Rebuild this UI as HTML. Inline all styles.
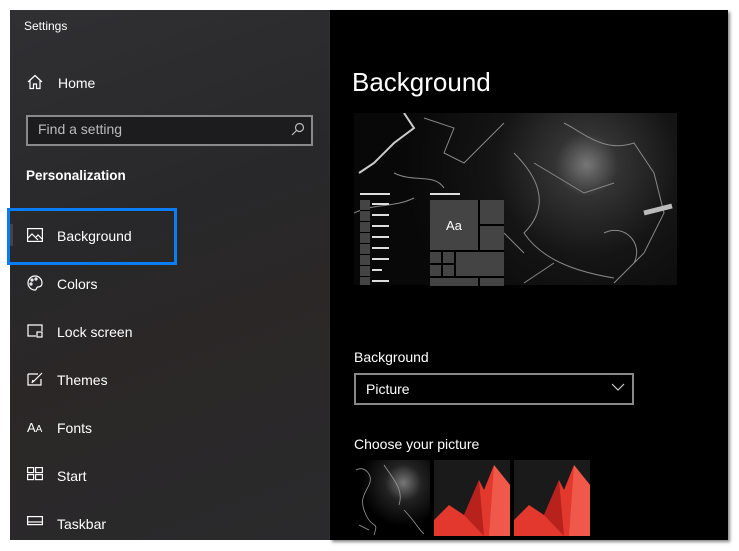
<!DOCTYPE html>
<html><head><style>
body{margin:0;width:739px;height:551px;background:#fff;position:relative;overflow:hidden;font-family:"Liberation Sans",sans-serif;color:#fff}
.l{position:absolute;left:10px;top:10px;width:320px;height:530px;background:linear-gradient(160deg,#303033 0%,#28282a 40%,#2b2727 60%,#2a2a2c 100%)}
.r{position:absolute;left:330px;top:10px;width:398px;height:530px;background:#000;box-shadow:2px 2px 3px #888}
.t{position:absolute;font-size:14px;white-space:nowrap}
.ic{position:absolute;left:27px}
.ab{position:absolute}
</style></head><body>
<div class="l"></div><div class="r"></div>
<div class="t" style="left:24px;top:19px;font-size:12px">Settings</div>
<svg class="ic" style="top:74px" width="16" height="16" viewBox="0 0 16 16" fill="none" stroke="#fff" stroke-width="1.2"><path d="M1 8L8 1.5 15 8M3 6.5V14.5H6.5V10H9.5V14.5H13V6.5"/></svg>
<div class="t" style="left:58px;top:75px">Home</div>
<div class="ab" style="left:26px;top:115px;width:283px;height:27px;border:2px solid #8a8a8a;background:#1c1c1e"></div>
<div class="t" style="left:38px;top:121px;color:#bbb;font-size:14px">Find a setting</div>
<svg class="ab" style="left:291px;top:122px" width="14" height="14" viewBox="0 0 14 14" fill="none" stroke="#bbb" stroke-width="1.2"><circle cx="8.5" cy="5.5" r="4"/><path d="M5.5 8.5L1 13"/></svg>
<div class="t" style="left:26px;top:168px;font-weight:bold;font-size:13.5px">Personalization</div>
<div class="ab" style="left:10px;top:224px;width:3px;height:22px;background:#444"></div>
<div class="ab" style="left:7px;top:208px;width:164px;height:51px;border:3px solid #0a7cf4"></div>
<svg class="ic" style="top:228px" width="16" height="14" viewBox="0 0 16 14" fill="none" stroke="#fff" stroke-width="1.2"><rect x="0.6" y="0.6" width="14.8" height="12.8"/><path d="M1 10L5 6 11 12M9 9L11 7 15 11"/></svg>
<div class="t" style="left:57px;top:228px">Background</div>
<svg class="ic" style="top:275px" width="16" height="16" viewBox="0 0 16 16" fill="none" stroke="#fff" stroke-width="1.2"><path d="M8 1A7 7 0 1 0 8 15C10 15 9 12 11 12S15 11 15 8A7 7 0 0 0 8 1Z"/><circle cx="5" cy="5" r="1"/><circle cx="9" cy="4" r="1"/><circle cx="4" cy="9" r="1"/></svg>
<div class="t" style="left:57px;top:276px">Colors</div>
<svg class="ic" style="top:324px" width="16" height="14" viewBox="0 0 16 14" fill="none" stroke="#fff" stroke-width="1.2"><path d="M9 12H1V1H15V7"/><rect x="10" y="8" width="5" height="5"/></svg>
<div class="t" style="left:57px;top:324px">Lock screen</div>
<svg class="ic" style="top:371px" width="16" height="16" viewBox="0 0 16 16" fill="none" stroke="#fff" stroke-width="1.2"><path d="M1 3H11M1 3V14H14V8M6 11L15 2M5 12L6 9"/></svg>
<div class="t" style="left:57px;top:372px">Themes</div>
<div class="t" style="left:27px;top:420px;font-size:13px">A<span style="font-size:10px">A</span></div>
<div class="t" style="left:57px;top:420px">Fonts</div>
<svg class="ic" style="top:467px" width="16" height="14" viewBox="0 0 16 14" fill="none" stroke="#fff" stroke-width="1.2"><rect x="0.6" y="0.6" width="6" height="5"/><rect x="8.6" y="0.6" width="6.8" height="5"/><rect x="0.6" y="7.6" width="6" height="5"/><rect x="8.6" y="7.6" width="6.8" height="5"/></svg>
<div class="t" style="left:57px;top:468px">Start</div>
<svg class="ic" style="top:516px" width="16" height="10" viewBox="0 0 16 10" fill="none" stroke="#fff" stroke-width="1.2"><rect x="0.6" y="0.6" width="14.8" height="8"/><path d="M1 6H15"/></svg>
<div class="t" style="left:57px;top:516px">Taskbar</div>

<div class="t" style="left:352px;top:67px;font-size:26px">Background</div>
<div class="ab" style="left:354px;top:113px;width:323px;height:172px;background:radial-gradient(circle at 72% 30%,#777 0,#333 12%,#151515 35%,#080808 70%)"></div>
<svg class="ab" style="left:354px;top:113px" width="323" height="172" fill="none" stroke="#888" stroke-width="1">
<path d="M50 0L60 15 40 30 20 50 5 60" stroke="#ccc" stroke-width="2"/>
<path d="M70 5L100 15 90 40 110 50 130 30 150 10M0 100C20 90 40 95 60 85M40 60C60 70 80 60 90 75"/>
<path d="M210 10C230 20 250 40 280 30L300 60 310 100 290 140 260 170M160 40C180 60 200 90 170 120 190 150 230 160 260 165M150 120L170 140M250 120C270 110 290 130 280 150M180 50L230 80 260 70M170 170L200 150"/>
<path d="M290 100L318 93" stroke="#bbb" stroke-width="5"/></svg>
<div class="ab" style="left:360px;top:193px;width:30px;height:2px;background:#ddd"></div>
<div class="ab" style="left:430px;top:193px;width:30px;height:2px;background:#ddd"></div>
<div class="ab" style="left:360px;top:200px;width:10px;height:85px;background:repeating-linear-gradient(#444 0 10px,#000 10px 11px)"></div>
<svg class="ab" style="left:372px;top:200px" width="20" height="85" stroke="#ddd" stroke-width="2"><path d="M0 4H17M0 15H17M0 26H17M0 37H17M0 48H17M0 59H17M0 70H10M0 81H17"/></svg>
<div class="ab" style="left:430px;top:200px;width:74px;height:86px;background:#000"></div>
<div class="ab" style="left:430px;top:200px;width:48px;height:50px;background:#444"></div>
<div class="t" style="left:446px;top:218px;font-size:13px">Aa</div>
<div class="ab" style="left:480px;top:200px;width:24px;height:24px;background:#444"></div>
<div class="ab" style="left:480px;top:226px;width:24px;height:24px;background:#444"></div>
<div class="ab" style="left:430px;top:252px;width:11px;height:11px;background:#444"></div>
<div class="ab" style="left:443px;top:252px;width:11px;height:11px;background:#444"></div>
<div class="ab" style="left:430px;top:265px;width:11px;height:11px;background:#444"></div>
<div class="ab" style="left:443px;top:265px;width:11px;height:11px;background:#444"></div>
<div class="ab" style="left:456px;top:252px;width:48px;height:24px;background:#444"></div>
<div class="ab" style="left:430px;top:278px;width:48px;height:8px;background:#444"></div>
<div class="ab" style="left:480px;top:278px;width:24px;height:8px;background:#444"></div>
<div class="t" style="left:354px;top:349px;font-size:14px">Background</div>
<div class="ab" style="left:354px;top:373px;width:276px;height:28px;border:2px solid #888"></div>
<div class="t" style="left:366px;top:381px;font-size:14px">Picture</div>
<svg class="ab" style="left:611px;top:383px" width="14" height="8" fill="none" stroke="#ccc" stroke-width="1.2"><path d="M1 1L7 7 13 1"/></svg>
<div class="t" style="left:354px;top:436px;font-size:14px">Choose your picture</div>
<div class="ab" style="left:354px;top:460px;width:76px;height:76px;background:radial-gradient(circle at 65% 30%,#777 0,#222 25%,#000 60%)"></div>
<svg class="ab" style="left:354px;top:460px" width="76" height="76" fill="none" stroke="#999" stroke-width="0.8"><path d="M2 10C10 5 20 15 15 25S5 40 12 55 25 60 20 75M30 5C40 20 50 30 45 45M50 50C60 60 65 70 70 74M5 65L15 70"/></svg>
<div class="ab" style="left:434px;top:460px;width:76px;height:76px;background:#1a1a1a;overflow:hidden"><svg width="76" height="76"><path d="M0 76L0 60 15 45 30 55 45 20 50 30 60 5 76 25 76 76Z" fill="#e2382e"/><path d="M30 55L45 20 50 76Z" fill="#b8221c"/><path d="M60 5L55 76 76 76 76 25Z" fill="#f0584a"/></svg></div>
<div class="ab" style="left:514px;top:460px;width:76px;height:76px;background:#1a1a1a;overflow:hidden"><svg width="76" height="76"><path d="M0 76L0 60 15 45 30 55 45 20 50 30 60 5 76 25 76 76Z" fill="#e2382e"/><path d="M30 55L45 20 50 76Z" fill="#b8221c"/><path d="M60 5L55 76 76 76 76 25Z" fill="#f0584a"/></svg></div>
</body></html>
